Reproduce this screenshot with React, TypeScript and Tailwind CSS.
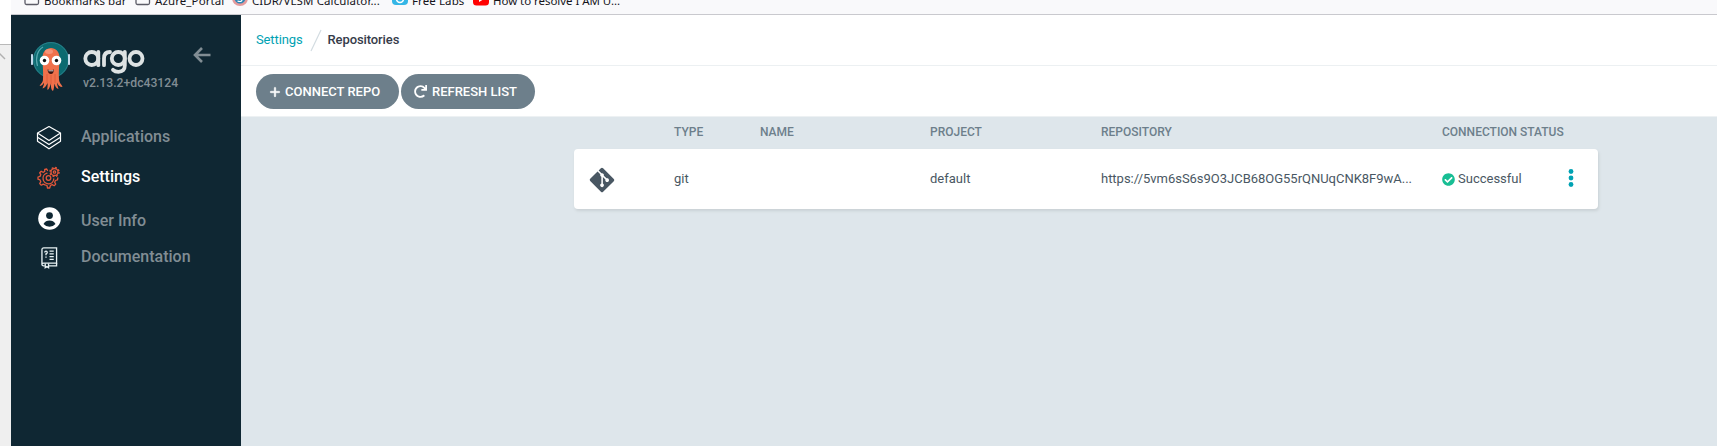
import React from "react";
import { FaPlus } from "react-icons/fa6";
import { FaCheckCircle, FaGitAlt } from "react-icons/fa";

const ArgoMascot = () => (
  <svg width="40" height="52" viewBox="0 0 40 52">
    <circle cx="20" cy="20" r="18" fill="#0b6a70" />
    <circle cx="20" cy="20" r="17.4" fill="none" stroke="#2c7f8a" strokeWidth="1" />
    <path d="M6.5 26C4 18 6.500 10 12 7" fill="none" stroke="#5aa9b0" strokeWidth="1.200" />
    <rect x="0" y="14" width="2" height="11" rx="0.800" fill="#c4d9ea" />
    <rect x="37" y="14" width="2" height="11" rx="0.800" fill="#c4d9ea" />
    <path d="M11.500 18C11 4.500 29 4.500 28.500 18C28.500 25 27.500 30 28 39C28 43 30.500 44 31.500 47C28.500 47 27 45 26 42.500C26 45 27 47 27.500 49C25 48.500 24 46 23.500 43.500C23 46.500 23 49 22 51C20 50 20 47 19.700 43.500C19 46 18.500 49 16.500 50C16 48 17 45.500 16.500 43C15.500 45.500 14 48 11.500 48.500C12 46 13.500 44.500 13 42.500C12 44.500 10.500 46 8.500 46C10 43.500 12 42.500 12 39C12.500 30 11.500 25 11.500 18Z" fill="#f0714b" />
    <path d="M16 34V43M20 35V44M24 34V43" stroke="#d85a38" strokeWidth="0.800" />
    <ellipse cx="18" cy="11.500" rx="4" ry="2.500" fill="#f69377" />
    <circle cx="13.500" cy="20.500" r="4.800" fill="#fff" />
    <circle cx="25.500" cy="20.500" r="4.800" fill="#fff" />
    <circle cx="13.500" cy="20.500" r="1.700" fill="#111" />
    <circle cx="25.500" cy="20.500" r="1.700" fill="#111" />
    <path d="M16.500 29.500Q20 31 23 29.500Q22.500 34 20 34Q17 34 16.500 29.500Z" fill="#3a1410" />
    <path d="M17.500 30.200Q20 31 22.300 30.200V31.200H17.500Z" fill="#fff" />
  </svg>
);

const ArgoWordmark = () => (
  <svg width="62" height="26" viewBox="0 0 62 26" fill="none" stroke="#dde2e3" strokeWidth="3.800" strokeLinecap="round">
    <circle cx="8.800" cy="9.500" r="6.500" />
    <path d="M15.300 3V16.200" />
    <path d="M21 16.200V9.500Q21 3 27 3" />
    <circle cx="35.300" cy="9.500" r="6.500" />
    <path d="M41.800 3V16.500Q41.800 22.800 35.500 22.800Q32 22.800 30 20.800" />
    <circle cx="53" cy="9.500" r="6.500" />
  </svg>
);

const Layers = () => (
  <svg width="26" height="26" viewBox="0 0 26 26" fill="none" stroke="#fff" strokeWidth="1.200" strokeLinejoin="round">
    <path d="M13 1.500L24.500 8L13 15.500L1.500 8Z" />
    <path d="M1.500 8V12.200L13 19.500L24.500 12.200V8" />
    <path d="M1.500 12.200V16.200L13 23.800L24.500 16.200V12.200" />
  </svg>
);

const Gears = () => (
  <svg width="24" height="24" viewBox="0 0 24 24" fill="none" stroke="#e2573a" strokeWidth="1.300" strokeLinejoin="round" strokeLinecap="round">
    <path d="M10.500 4.500L9.700 3L7.700 3.500V5.500L6 6.300L4.200 5.200L2.700 6.800L3.800 8.700L3 10.400L1 11V13.200L3 13.900L3.800 15.700L2.700 17.600L4.300 19.200L6.200 18.100L8 18.900L10 19.500L10.500 22H12.700L13.400 19.500L15.200 18.600L17.200 19.700L18.700 18.100L17.700 16.200L18.400 14.500L20.500 13.800L20.800 12" />
    <path d="M10 7.200A5.400 5.400 0 1 0 16.800 13" />
    <circle cx="11.500" cy="12" r="2.300" />
    <circle cx="17.500" cy="6" r="3.500" />
    <circle cx="17.500" cy="6" r="1.200" />
    <circle cx="17.500" cy="6" r="4.500" strokeWidth="1.500" strokeDasharray="1.800 1.740" strokeLinecap="butt" />
  </svg>
);

const UserCircle = () => (
  <svg width="23" height="23" viewBox="0 0 23 23">
    <circle cx="11.500" cy="11.500" r="11.300" fill="#fff" />
    <circle cx="11.500" cy="8.600" r="3.400" fill="#0f2733" />
    <path d="M5.500 17Q7.500 13.600 11.500 13.600Q15.500 13.600 17.500 17Q15 19.800 11.500 19.800Q8 19.800 5.500 17Z" fill="#0f2733" />
  </svg>
);

const DocBook = () => (
  <svg width="17" height="22" viewBox="0 0 18 24" preserveAspectRatio="none" fill="none" stroke="#e8f2f4" strokeWidth="1.400">
    <path d="M4 20.500H2.800Q1 20.500 1 18.800V3Q1 1 3 1H16.500V17.500H3Q1 17.500 1 19" />
    <path d="M16.500 17.500V20.500H8.500" />
    <path d="M4.500 18V22.500L6.200 21.200L8 22.500V18" />
    <path d="M9 4.500H13.500M9 7.500H13.500M9 10.500H13.500M9 13.500H13.500" />
    <path d="M4 6Q4 4.500 5.300 4.500Q6.600 4.500 6.600 6Q6.600 7.200 5.300 7.500V9M5.300 10.300V11.800" />
  </svg>
);

const BackArrow = () => (
  <svg width="18" height="16" viewBox="0 0 18 16" fill="none" stroke="#818d94" strokeWidth="2.600">
    <path d="M17.500 8H2.500M9 1L2 8L9 15" />
  </svg>
);

const RefreshIcon = () => (
  <svg width="13" height="13" viewBox="0 0 512 512" fill="#fff">
    <path d="M500.330 0h-47.410a12 12 0 0 0-12 12.570l4 82.760A247.420 247.420 0 0 0 256 8C119.340 8 7.900 119.530 8 256.190 8.100 393.070 119.100 504 256 504a247.100 247.100 0 0 0 166.180-63.910 12 12 0 0 0 .48-17.430l-34-34a12 12 0 0 0-16.380-.55A176 176 0 1 1 402.100 157.800l-101.530-4.870a12 12 0 0 0-12.570 12v47.410a12 12 0 0 0 12 12h200.330a12 12 0 0 0 12-12V12a12 12 0 0 0-12-12z" />
  </svg>
);

const Folder = () => (
  <svg width="16" height="14" viewBox="0 0 16 14" fill="none" stroke="#5b5b66" strokeWidth="1.300">
    <path d="M1 2V11Q1 12.500 2.500 12.500H13Q14.500 12.500 14.500 11V2" />
  </svg>
);

type BookmarkProps = { icon: React.ReactNode; label: string; className: string };
const Bookmark = ({ icon, label, className }: BookmarkProps) => (
  <div className={`flex shrink-0 items-start gap-1 whitespace-nowrap ${className}`}>
    <span className="-mt-px shrink-0">{icon}</span>
    <span>{label}</span>
  </div>
);

type NavProps = { icon: React.ReactNode; label: string; active?: boolean; className: string };
const NavItem = ({ icon, label, active, className }: NavProps) => (
  <a className={`flex h-[26px] items-center ${className}`}>
    <span className="flex w-[26px] justify-center">{icon}</span>
    <span className={`ml-[19px] text-base font-medium ${active ? "text-white" : "text-[#818d94]"}`}>{label}</span>
  </a>
);

export default function App() {
  return (
    <div className="flex h-[446px] w-[1717px] overflow-hidden bg-white font-[Roboto,sans-serif]">
      <div className="flex w-[11px] shrink-0 flex-col">
        <div className="h-[45px] border-b border-[#b9b9b9] bg-white" />
        <div className="flex-1 overflow-hidden bg-[#efefef] pt-[7px]">
          <svg width="6" height="8" viewBox="0 0 6 8" fill="none" stroke="#b0b0b0" strokeWidth="1.500"><path d="M-1 1L5 7" /></svg>
        </div>
      </div>
      <div className="flex min-w-0 flex-1 flex-col">
        <header className="flex h-[15px] shrink-0 items-start overflow-hidden border-b border-[#c9c9ce] bg-[#f9f9fb] pl-[13px] font-['Noto_Sans',sans-serif] text-[11.5px] leading-[16px] text-[#15141a]">
          <div className="-mt-[7px] flex items-start">
            <Bookmark className="w-[111px]" icon={<Folder />} label="Bookmarks bar" />
            <Bookmark className="w-[97px] tracking-[0.1px]" icon={<Folder />} label="Azure_Portal" />
            <Bookmark
              className="w-[160px] tracking-[0.1px]"
              icon={<svg width="16" height="15"><circle cx="8" cy="6" r="8" fill="#e39a9c" /><circle cx="8" cy="6" r="5.500" fill="#2d86b5" /><path d="M5.500 9Q10 10.500 10 7.500" stroke="#fff" strokeWidth="1.200" fill="none" /></svg>}
              label="CIDR/VLSM Calculator..."
            />
            <Bookmark
              className="w-[81px] tracking-[0.1px]"
              icon={<svg width="16" height="14"><rect width="16" height="13" rx="4" fill="#35b6e6" /><circle cx="8" cy="7" r="3.500" fill="none" stroke="#fff" strokeWidth="1.500" /></svg>}
              label="Free Labs"
            />
            <Bookmark
              className="tracking-[-0.05px]"
              icon={<svg width="16" height="14"><rect y="1" width="16" height="12.500" rx="3.500" fill="#f00" /><path d="M6 4.500L11 7L6 10Z" fill="#fff" /></svg>}
              label="How to resolve I AM U..."
            />
          </div>
        </header>

        <div className="flex min-h-0 flex-1">
          <aside className="flex w-[230px] shrink-0 flex-col bg-[#0f2733]">
            <div className="flex pl-[20px] pt-[25px]">
              <ArgoMascot />
              <div className="ml-[12px] w-[96px] pt-[9px]">
                <ArgoWordmark />
                <div className="whitespace-nowrap text-[12.2px] font-medium leading-[16px] text-[#818d94]">v2.13.2+dc43124</div>
              </div>
              <div className="ml-[14px] pt-[7px]"><BackArrow /></div>
            </div>
            <nav className="flex flex-col pl-[25px] pt-[32px]">
              <NavItem className="" icon={<span className="translate-y-px"><Layers /></span>} label="Applications" />
              <NavItem className="mt-[14px]" icon={<span className="translate-y-px"><Gears /></span>} label="Settings" active />
              <NavItem className="mt-[18px]" icon={<span className="-translate-y-[3px]"><UserCircle /></span>} label="User Info" />
              <NavItem className="mt-[10px]" icon={<span className="translate-y-[1px]"><DocBook /></span>} label="Documentation" />
            </nav>
          </aside>

          <main className="flex min-w-0 flex-1 flex-col bg-[#dee6eb]">
            <div className="flex h-[51px] items-center border-b border-[#ecf0f2] bg-white pl-[15px] text-[13px]">
              <a className="tracking-[-0.12px] text-[#00a2b3]">Settings</a>
              <svg className="ml-[7px] mr-[6px]" width="12" height="23" viewBox="0 0 12 23" stroke="#d3dce1" strokeWidth="1.200"><path d="M1 22L11 1" /></svg>
              <span className="font-medium tracking-[-0.1px] text-[#363c4a]">Repositories</span>
            </div>
            <div className="flex h-[51px] gap-[2px] border-b border-[#edf1f3] bg-white pl-[15px] pt-[8px] text-[13px] font-medium text-white">
              <button className="flex h-[35px] w-[143px] items-center rounded-full bg-[#6d7f8b] pl-[13px]">
                <FaPlus size={12} className="stroke-white stroke-[20]" /><span className="ml-[4px] whitespace-nowrap">CONNECT REPO</span>
              </button>
              <button className="flex h-[35px] w-[134px] items-center rounded-full bg-[#6d7f8b] pl-[13px]">
                <RefreshIcon /><span className="ml-[5px] whitespace-nowrap">REFRESH LIST</span>
              </button>
            </div>

            <section className="ml-[333px] w-[1024px]">
              <div className="grid h-[32px] grid-cols-[85px_86px_170px_171px_341px_1fr] items-center pb-[2px] pl-[15px] text-[12px] font-medium text-[#6d7f8b]">
                <span />
                <span>TYPE</span>
                <span>NAME</span>
                <span>PROJECT</span>
                <span>REPOSITORY</span>
                <span>CONNECTION STATUS</span>
              </div>
              <div className="grid h-[60px] grid-cols-[85px_86px_170px_171px_341px_1fr] items-center rounded bg-white pl-[15px] text-[13px] text-[#495763] shadow-[1px_2px_3px_#cad1d5]">
                <FaGitAlt size={28} className="-ml-px translate-y-px text-[#495763]" />
                <span>git</span>
                <span />
                <span>default</span>
                <span className="whitespace-nowrap tracking-[-0.02px]">https://5vm6sS6s9O3JCB68OG55rQNUqCNK8F9wA...</span>
                <div className="flex items-center">
                  <FaCheckCircle size={13} className="text-[#18be94]" />
                  <span className="ml-[3px]">Successful</span>
                  <svg className="ml-[46px] -translate-y-px" width="6" height="18" viewBox="0 0 6 18" fill="#00a2b3"><circle cx="3" cy="2.500" r="2.400" /><circle cx="3" cy="9" r="2.400" /><circle cx="3" cy="15.500" r="2.400" /></svg>
                </div>
              </div>
            </section>
          </main>
        </div>
      </div>
    </div>
  );
}
